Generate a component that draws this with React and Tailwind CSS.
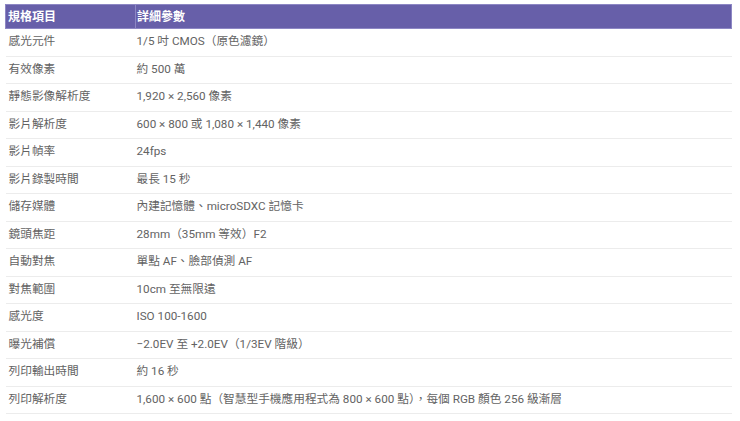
const rows = [
  ['感光元件', '1/5 吋 CMOS（原色濾鏡）'],
  ['有效像素', '約 500 萬'],
  ['靜態影像解析度', '1,920 × 2,560 像素'],
  ['影片解析度', '600 × 800 或 1,080 × 1,440 像素'],
  ['影片幀率', '24fps'],
  ['影片錄製時間', '最長 15 秒'],
  ['儲存媒體', '內建記憶體、microSDXC 記憶卡'],
  ['鏡頭焦距', '28mm（35mm 等效）F2'],
  ['自動對焦', '單點 AF、臉部偵測 AF'],
  ['對焦範圍', '10cm 至無限遠'],
  ['感光度', 'ISO 100-1600'],
  ['曝光補償', '−2.0EV 至 +2.0EV（1/3EV 階級）'],
  ['列印輸出時間', '約 16 秒'],
  ['列印解析度', '1,600 × 600 點（智慧型手機應用程式為 800 × 600 點），每個 RGB 顏色 256 級漸層'],
];

export default function App() {
  return (
    <div
      className="h-[421px] w-[740px] bg-white pl-[5px] pt-[4px]"
      style={{ fontFamily: 'Roboto, "Noto Sans CJK TC", sans-serif' }}
    >
      <table className="w-[727px] border-collapse text-left text-[11.7px]">
        <thead>
          <tr className="h-[24px] bg-[#675fa9] text-[12px] text-white">
            <th className="w-[130px] border border-[#8d87c4] pl-[2px] font-bold">規格項目</th>
            <th className="border border-[#8d87c4] pl-[1px] font-bold">詳細參數</th>
          </tr>
        </thead>
        <tbody className="text-[#636363]">
          {rows.map(([k, v]) => (
            <tr key={k} className="h-[27.5px] border-b border-[#ececec]">
              <td className="pl-[3px]">{k}</td>
              <td className="pl-[1px]">{v}</td>
            </tr>
          ))}
        </tbody>
      </table>
    </div>
  );
}
